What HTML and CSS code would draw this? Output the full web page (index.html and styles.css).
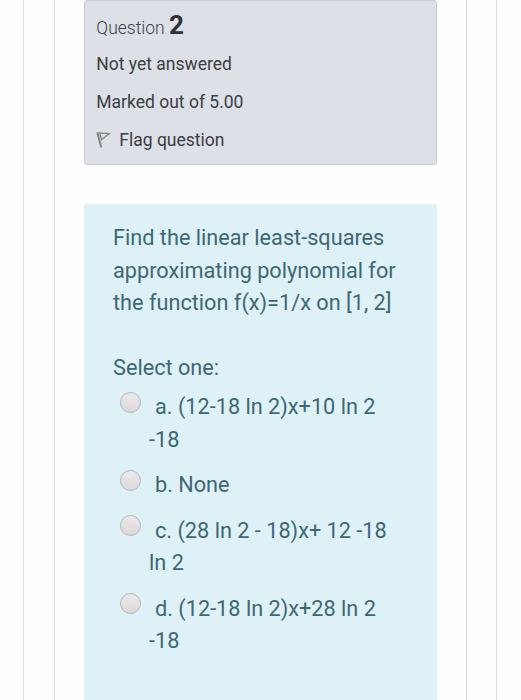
FILE: index.html
```html
<!DOCTYPE html>
<html lang="en">
<head>
  <meta charset="UTF-8">
  <meta name="viewport" content="width=device-width, initial-scale=1.0">
  <title>Quiz - Question 2</title>
  <link rel="stylesheet" href="styles.css">
</head>
<body>
  <div class="page">
    <div class="region">
      <div class="info">
        <h3 class="no">Question <span class="qno">2</span></h3>
        <div class="state">Not yet answered</div>
        <div class="grade">Marked out of 5.00</div>
        <div class="flag">
          <svg width="16" height="18" viewBox="0 0 16 18" fill="none" stroke="#858689">
            <path d="M1.3 1.5 L5.3 16.5" stroke-width="2"/>
            <path d="M1.5 2 L13.5 2.6 L5.5 8.6 L4 3" stroke-width="1.3"/>
          </svg>
          <span>Flag question</span>
        </div>
      </div>

      <div class="formulation">
        <div class="qtext">Find the linear least-squares<br>approximating polynomial for<br>the function f(x)=1/x on [1, 2]</div>
        <div class="prompt">Select one:</div>
        <div class="answer">
          <label class="option"><input type="radio" name="q2"><span>a. (12-18 ln 2)x+10 ln 2<br>-18</span></label>
          <label class="option"><input type="radio" name="q2"><span>b. None</span></label>
          <label class="option"><input type="radio" name="q2"><span>c. (28 ln 2 - 18)x+ 12 -18<br>ln 2</span></label>
          <label class="option"><input type="radio" name="q2"><span>d. (12-18 ln 2)x+28 ln 2<br>-18</span></label>
        </div>
      </div>
    </div>
  </div>
</body>
</html>
```

FILE: styles.css
```css
* {
  box-sizing: border-box;
}
body {
  margin: 0;
  height: 700px;
  overflow: hidden;
  background-color: #fefefe;
  font-family: Roboto, "Liberation Sans", sans-serif;
  color: #3b3e42;
}
.page {
  height: 700px;
  margin: 0 24px 0 23px;
  padding: 0 29px 0 30px;
  border-left: 1.5px solid #dedfe0;
  border-right: 1px solid #dcdcdd;
}
.region {
  height: 700px;
  padding: 0 29px;
  border-left: 1px solid #dadbdc;
  border-right: 1px solid #d8d8d9;
}
.info {
  height: 165px;
  padding: 7px 11.3px;
  background-color: #dde0e6;
  border: 1px solid #c9ccd3;
  border-radius: 3px;
  font-size: 17.5px;
  line-height: 26px;
}
.no {
  height: 43px;
  margin: 0;
  font-size: 17.5px;
  font-weight: 300;
  line-height: 34px;
}
.qno {
  font-size: 26px;
  font-weight: 700;
  color: #2d3035;
}
.state, .grade {
  margin-bottom: 12px;
}
.flag {
  display: flex;
  align-items: center;
}
.flag svg {
  margin-right: 7px;
}
.formulation {
  height: 520px;
  margin-top: 39px;
  padding: 18px 28px 0 29px;
  background-color: #def1f7;
  border-radius: 4px;
  color: #3d6873;
  font-size: 21.7px;
  line-height: 32.5px;
  white-space: nowrap;
}
.prompt {
  margin-top: 32px;
}
.answer {
  padding: 7px 0 0 7px;
}
.option {
  display: flex;
  align-items: flex-start;
  margin-bottom: 13px;
}
.option input {
  appearance: none;
  flex: none;
  width: 21px;
  height: 21px;
  margin: 0.5px 8px 0 0;
  border: 1px solid #b3b5b7;
  border-radius: 50%;
  background: linear-gradient(#ebe9e9, #dcd9da);
}
.option span {
  text-indent: 6px;
}
```
